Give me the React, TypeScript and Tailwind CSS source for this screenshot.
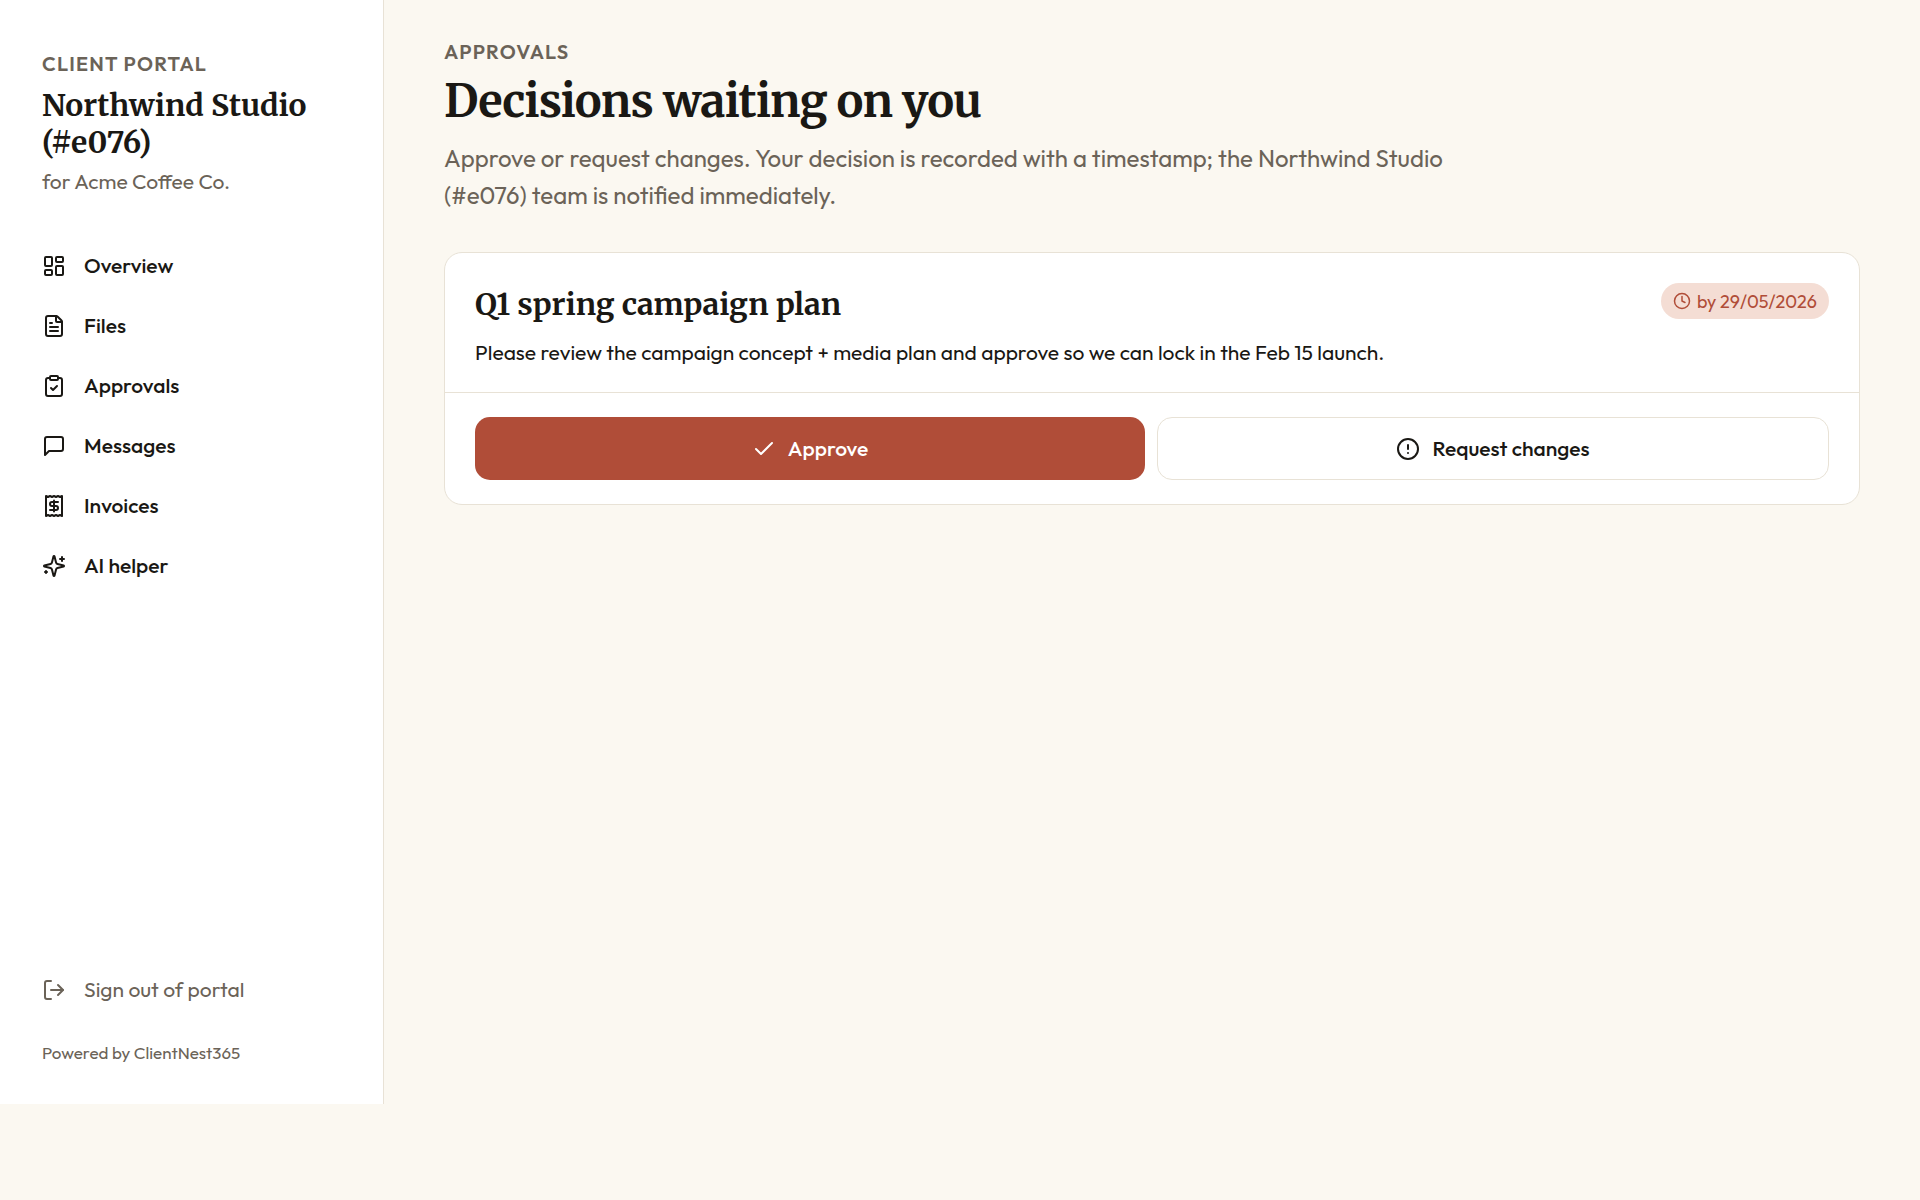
import React from 'react';
import {
  Check,
  CircleAlert,
  ClipboardCheck,
  Clock,
  FileText,
  LayoutDashboard,
  LogOut,
  Receipt,
} from 'lucide-react';

type IconProps = { className?: string };

function StrokeIcon({ className, children }: IconProps & { children: React.ReactNode }) {
  return (
    <svg
      className={className}
      viewBox="0 0 24 24"
      fill="none"
      stroke="currentColor"
      strokeWidth={2}
      strokeLinecap="round"
      strokeLinejoin="round"
      aria-hidden="true"
    >
      {children}
    </svg>
  );
}

function MessageIcon({ className }: IconProps) {
  return (
    <StrokeIcon className={className}>
      <path d="M21 15a2 2 0 0 1-2 2H7l-4 4V5a2 2 0 0 1 2-2h14a2 2 0 0 1 2 2z" />
    </StrokeIcon>
  );
}

function SparklesIcon({ className }: IconProps) {
  return (
    <StrokeIcon className={className}>
      <path d="M9.937 15.5A2 2 0 0 0 8.5 14.063l-6.135-1.582a.5.5 0 0 1 0-.962L8.5 9.936A2 2 0 0 0 9.937 8.5l1.582-6.135a.5.5 0 0 1 .963 0L14.063 8.5A2 2 0 0 0 15.5 9.937l6.135 1.581a.5.5 0 0 1 0 .964L15.5 14.063a2 2 0 0 0-1.437 1.437l-1.582 6.135a.5.5 0 0 1-.963 0z" />
      <path d="M20 3v4" />
      <path d="M22 5h-4" />
      <path d="M4 17v2" />
      <path d="M5 18H3" />
    </StrokeIcon>
  );
}

const navItems = [
  { label: 'Overview', icon: LayoutDashboard },
  { label: 'Files', icon: FileText },
  { label: 'Approvals', icon: ClipboardCheck },
  { label: 'Messages', icon: MessageIcon },
  { label: 'Invoices', icon: Receipt },
  { label: 'AI helper', icon: SparklesIcon },
];

function Sidebar() {
  return (
    <aside className="flex h-[92vh] w-96 shrink-0 flex-col border-r border-[#e8e2d6] bg-white px-6 pt-12 pb-[38px]">
      <div className="px-[18px]">
        <p className="text-[20px] leading-[32px] font-semibold tracking-[0.06em] text-[#6b6358] uppercase">
          Client portal
        </p>
        <p className="mt-[7px] font-['Merriweather','Liberation_Serif',serif] text-[30px] leading-[37px] font-bold">
          Northwind Studio (#e076)
        </p>
        <p className="mt-1 text-[21px] leading-[32px] text-[#6b6358]">for Acme Coffee Co.</p>
      </div>

      <nav className="mt-[39px] flex flex-col">
        {navItems.map(({ label, icon: Icon }) => (
          <a key={label} href="#" className="flex h-15 items-center gap-[18px] px-[18px] text-[21px] font-medium">
            <Icon className="size-6" />
            {label}
          </a>
        ))}
      </nav>

      <div className="mt-auto">
        <button type="button" className="flex h-15 w-full items-center gap-[18px] px-[18px] text-[21px] text-[#6b6358]">
          <LogOut className="size-6" />
          Sign out of portal
        </button>
        <p className="mt-5 px-[18px] text-[17px] leading-[26px] text-[#6b6358]">Powered by ClientNest365</p>
      </div>
    </aside>
  );
}

function ApprovalCard() {
  return (
    <article className="mt-[38px] rounded-[18px] border border-[#e8e2d6] bg-white">
      <div className="px-[30px] pt-[30px] pb-6">
        <div className="flex items-start justify-between gap-6">
          <h2 className="font-['Merriweather','Liberation_Serif',serif] text-[30px] leading-[42px] font-bold">
            Q1 spring campaign plan
          </h2>
          <span className="flex h-9 items-center gap-1.5 rounded-full bg-[#f4ddd4] px-3 text-[18px] text-[#b04d38]">
            <Clock className="size-[18px]" />
            by 29/05/2026
          </span>
        </div>
        <p className="mt-[11px] text-[21px] leading-[32px]">
          Please review the campaign concept + media plan and approve so we can lock in the Feb 15 launch.
        </p>
      </div>
      <div className="flex gap-3 border-t border-[#e8e2d6] px-[30px] py-6">
        <button
          type="button"
          className="flex h-[63px] flex-1 items-center justify-center gap-3 rounded-[15px] bg-[#b04d38] text-[21px] font-medium text-white"
        >
          <Check className="size-6" />
          Approve
        </button>
        <button
          type="button"
          className="flex h-[63px] flex-1 items-center justify-center gap-3 rounded-[15px] border border-[#e8e2d6] bg-white text-[21px] font-medium"
        >
          <CircleAlert className="size-6" />
          Request changes
        </button>
      </div>
    </article>
  );
}

export default function App() {
  return (
    <div className="flex min-h-screen items-start bg-[#fbf8f1] font-['Outfit','Lato',sans-serif] text-[#1a1814]">
      <Sidebar />
      <main className="min-w-0 flex-1 px-15 pt-9 pb-15">
        <p className="text-[20px] leading-[32px] font-semibold tracking-[0.06em] text-[#6b6358] uppercase">Approvals</p>
        <h1 className="mt-1 font-['Merriweather','Liberation_Serif',serif] text-[45px] leading-[58px] font-bold tracking-[-0.02em]">
          Decisions waiting on you
        </h1>
        <p className="mt-2.5 max-w-[1008px] text-[24px] leading-[37px] text-[#6b6358]">
          Approve or request changes. Your decision is recorded with a timestamp; the Northwind Studio (#e076) team is
          notified immediately.
        </p>
        <ApprovalCard />
      </main>
    </div>
  );
}
